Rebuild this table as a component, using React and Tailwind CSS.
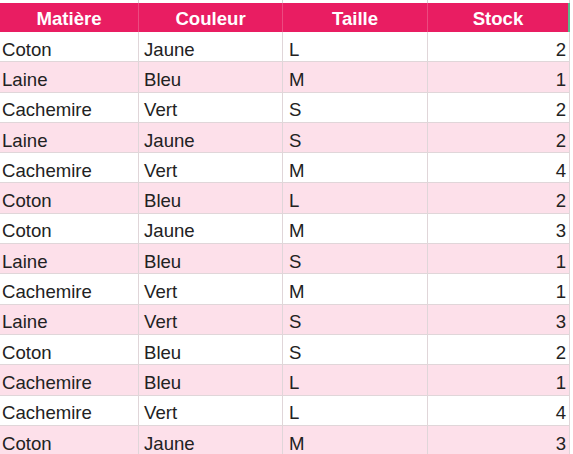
import React from 'react';

const rows = [
  ['Coton', 'Jaune', 'L', 2],
  ['Laine', 'Bleu', 'M', 1],
  ['Cachemire', 'Vert', 'S', 2],
  ['Laine', 'Jaune', 'S', 2],
  ['Cachemire', 'Vert', 'M', 4],
  ['Coton', 'Bleu', 'L', 2],
  ['Coton', 'Jaune', 'M', 3],
  ['Laine', 'Bleu', 'S', 1],
  ['Cachemire', 'Vert', 'M', 1],
  ['Laine', 'Vert', 'S', 3],
  ['Coton', 'Bleu', 'S', 2],
  ['Cachemire', 'Bleu', 'L', 1],
  ['Cachemire', 'Vert', 'L', 4],
  ['Coton', 'Jaune', 'M', 3],
];

const cols = 'grid grid-cols-[139px_144px_145px_142px_3px]';

export default function App() {
  return (
    <div className="w-[573px] h-[454px] overflow-hidden bg-white font-['Liberation_Sans',Arial,sans-serif] text-[18.6px] text-[#222]">
      {/* strip above the header */}
      <div className={`${cols} h-[3px]`}>
        <div className="border-r border-[#d4d4d4]" />
        <div className="border-r border-[#d4d4d4]" />
        <div className="border-r border-[#d4d4d4]" />
        <div className="border-r border-[#d4d4d4]" />
        <div />
      </div>

      <div className={`${cols} h-[29px] font-bold text-white leading-none`}>
        {['Matière', 'Couleur', 'Taille', 'Stock'].map((h, i) => (
          <div
            key={h}
            className={`bg-[#e91d62] flex items-center justify-center pt-[4px] ${
              i < 3 ? 'border-r border-[#ec4a80]' : 'border-r-2 border-[#57bb8a]'
            }`}
          >
            {h}
          </div>
        ))}
        <div />
      </div>

      {rows.map((r, idx) => {
        const bg = idx % 2 === 1 ? 'bg-[#fde0ea]' : 'bg-white';
        return (
          <div key={idx} className={`${cols} h-[30.3px] leading-none`}>
            <div className={`${bg} border-r border-b border-[#e0d6d9] flex items-end pl-[2px] pb-[2px]`}>{r[0]}</div>
            <div className={`${bg} border-r border-b border-[#e0d6d9] flex items-end pl-[5px] pb-[2px]`}>{r[1]}</div>
            <div className={`${bg} border-r border-b border-[#e0d6d9] flex items-end pl-[6px] pb-[2px]`}>{r[2]}</div>
            <div className={`${bg} border-r border-b border-[#e0d6d9] flex items-end justify-end pr-[3px] pb-[2px]`}>{r[3]}</div>
            <div />
          </div>
        );
      })}
    </div>
  );
}
